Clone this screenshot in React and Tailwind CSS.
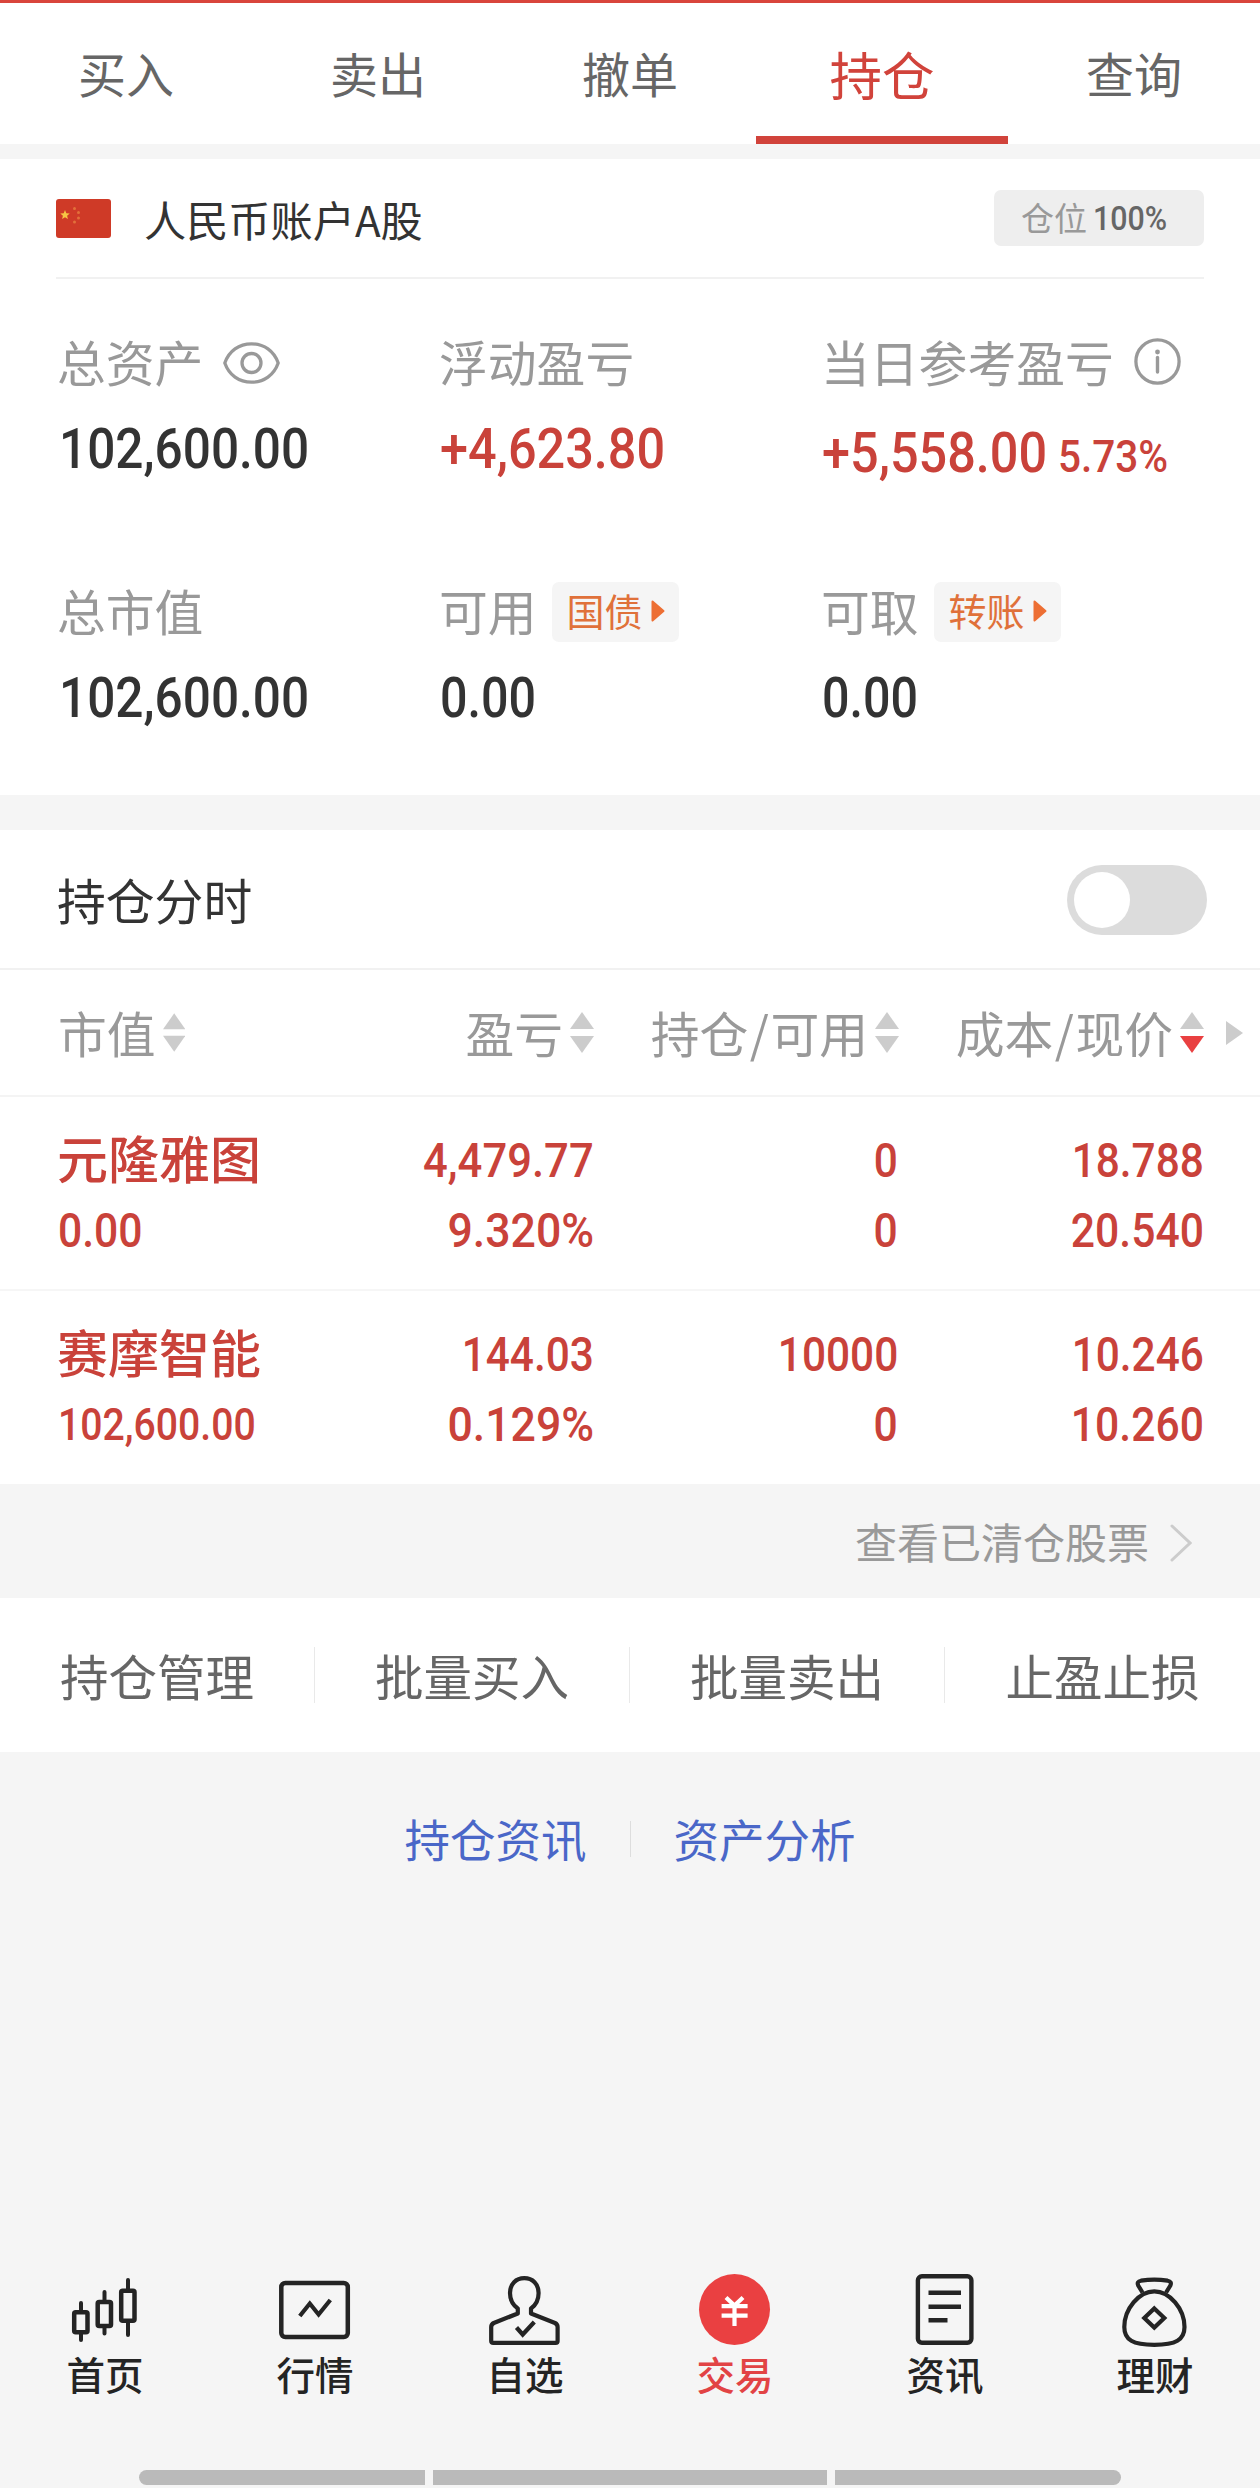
const RED = "text-[#c9423a]";

function Num({ children, className = "", size = "text-[56px]", right = false, scale = "scale-x-[0.9]" }) {
  return (
    <span
      className={`block whitespace-nowrap font-['Roboto',sans-serif] font-medium leading-none ${size} ${scale} ${right ? "origin-right" : "origin-left"} ${className}`}
    >
      {children}
    </span>
  );
}

function Tabs() {
  const tabs = ["买入", "卖出", "撤单", "持仓", "查询"];
  return (
    <nav className="grid h-[144px] grid-cols-5 border-t-[3px] border-[#d9453c] bg-white">
      {tabs.map((t) =>
        t === "持仓" ? (
          <div key={t} className="flex items-center justify-center border-b-8 border-[#d1433b] pt-[7px] text-[52.5px] text-[#d1433b]">
            <span>{t}</span>
          </div>
        ) : (
          <div key={t} className="flex items-center justify-center pb-[4px] text-[48px] text-[#666]">
            <span>{t}</span>
          </div>
        )
      )}
    </nav>
  );
}

function Flag() {
  return (
    <svg width="55" height="39" viewBox="0 0 55 39">
      <rect width="55" height="39" rx="3" fill="#cf3a27" />
      <path d="M9 11l1.3 3.2 3.4.3-2.6 2.2.8 3.3L9 18.200l-2.900 1.800.8-3.300-2.600-2.200 3.400-.3z" fill="#f6c544" />
      <g fill="#e2703a">
        <circle cx="18.500" cy="9.500" r="1.500" />
        <circle cx="22.500" cy="13.500" r="1.500" />
        <circle cx="22.500" cy="19" r="1.500" />
        <circle cx="18.500" cy="23" r="1.500" />
      </g>
    </svg>
  );
}

function EyeIcon() {
  return (
    <svg width="57" height="42" viewBox="0 0 57 42" fill="none" stroke="#999" strokeWidth="3.300">
      <path d="M1.800 21C6 9 16 1.800 28.500 1.800S51 9 55.200 21C51 33 41 40.200 28.500 40.200S6 33 1.800 21z" strokeLinejoin="round" />
      <circle cx="28.500" cy="21" r="9.500" />
    </svg>
  );
}

function InfoIcon() {
  return (
    <svg width="47" height="47" viewBox="0 0 47 47" fill="none" stroke="#999">
      <circle cx="23.500" cy="23.500" r="21.600" strokeWidth="3.300" />
      <circle cx="23.500" cy="14" r="2.400" fill="#999" stroke="none" />
      <path d="M23.500 19.500V34" strokeWidth="3.400" strokeLinecap="round" />
    </svg>
  );
}

function Chip({ children }) {
  return (
    <span className="-mt-px ml-[15px] flex h-[60px] w-[127px] items-center rounded-[7px] bg-[#f5f5f5] pl-[15px] text-[38px] text-[#e0713a]">
      <span className="-mt-[4px]">{children}</span>
      <svg className="-mt-[2px] ml-[8px]" width="14" height="22" viewBox="0 0 14 22">
        <path d="M1.500 1.500L12.500 11L1.500 20.500z" fill="#ed6f34" stroke="#ed6f34" strokeWidth="2" strokeLinejoin="round" />
      </svg>
    </span>
  );
}

function Stat({ label, extra, children }) {
  return (
    <div className="w-[382px] shrink-0">
      <div className="flex h-[60px] items-center text-[48.8px] text-[#999]">
        <span className="-ml-px -mt-[4px]">{label}</span>
        {extra}
      </div>
      <div className="mt-[28px] flex h-[56px] items-baseline whitespace-nowrap text-[#333]">{children}</div>
    </div>
  );
}

function Account() {
  return (
    <section className="h-[636px] bg-white pl-[56px] pr-[56px]">
      <div className="flex h-[120px] items-center border-b-2 border-[#f1f1f1]">
        <Flag />
        <span className="ml-[33px] mt-[2px] text-[42.2px] text-[#333]">人民币账户A股</span>
        <span className="ml-auto flex h-[56px] w-[210px] items-center rounded-[7px] bg-[#eee] pl-[27px]">
          <span className="-mt-[1px] text-[33px] text-[#999]">仓位</span>
          <Num size="text-[33px]" className="ml-[6px] mt-[1px] text-[#666]" scale="scale-x-[0.92]">100%</Num>
        </span>
      </div>
      <div className="flex pl-[2px] pt-[54px]">
        <Stat label="总资产" extra={<span className="ml-[20px]"><EyeIcon /></span>}>
          <Num className="ml-px" scale="scale-x-[0.885]">102,600.00</Num>
        </Stat>
        <Stat label="浮动盈亏">
          <Num className={RED}>+4,623.80</Num>
        </Stat>
        <Stat label="当日参考盈亏" extra={<span className="-mt-[3px] ml-[20px]"><InfoIcon /></span>}>
          <span className="w-[236px] pt-[4px]"><Num className={RED}>+5,558.00</Num></span>
          <Num size="text-[45px]" className={RED}>5.73%</Num>
        </Stat>
      </div>
      <div className="flex pl-[2px] pt-[105px]">
        <Stat label="总市值"><Num className="ml-px" scale="scale-x-[0.885]">102,600.00</Num></Stat>
        <Stat label="可用" extra={<Chip>国债</Chip>}><Num scale="scale-x-[0.865]">0.00</Num></Stat>
        <Stat label="可取" extra={<Chip>转账</Chip>}><Num scale="scale-x-[0.865]">0.00</Num></Stat>
      </div>
    </section>
  );
}

function Sort({ down }) {
  return (
    <svg className="ml-[9px]" width="24" height="41" viewBox="0 0 24 41">
      <path d="M12 0L24 17H0z" fill="#ccc" />
      <path d="M12 41L24 24H0z" fill={down ? "#e94041" : "#ccc"} />
    </svg>
  );
}

function HeadCell({ children, down, className = "" }) {
  return (
    <div className={`flex shrink-0 items-center whitespace-nowrap ${className}`}>
      <span className="-mr-[2px]">{children}</span>
      <Sort down={down} />
    </div>
  );
}

function Row({ name, value, valueSize, cells }) {
  return (
    <div className={`grid h-[192px] grid-cols-[255px_281px_304px_306px] pl-[58px] pt-[28px] ${RED}`}>
      <div>
        <div className="flex h-[70px] items-center text-[51px] font-medium">
          <span className="-ml-px -mt-[5px]">{name}</span>
        </div>
        <div className="flex h-[70px] items-center"><Num size={valueSize} scale="scale-x-[0.87]">{value}</Num></div>
      </div>
      {cells.map(([a, b], i) => (
        <div key={i} className="flex flex-col items-end">
          <div className="flex h-[70px] items-center">
            <Num size="text-[49px]" right scale={a.includes(",") ? "scale-x-[0.89]" : "scale-x-[0.865]"}>{a}</Num>
          </div>
          <div className="flex h-[70px] items-center">
            <Num size="text-[49px]" right scale={b.endsWith("%") ? "scale-x-[0.91]" : "scale-x-[0.87]"}>{b}</Num>
          </div>
        </div>
      ))}
    </div>
  );
}

function Positions() {
  return (
    <section className="h-[654px] bg-white">
      <div className="flex h-[140px] items-center border-b-2 border-[#f1f1f1] pl-[57px] pr-[53px]">
        <span className="text-[48.8px] text-[#333]">持仓分时</span>
        <span className="ml-auto mt-[2px] flex h-[70px] w-[140px] items-center rounded-full bg-[#dcdcdc] pl-[7px]">
          <span className="h-14 w-14 rounded-full bg-white" />
        </span>
      </div>
      <div className="flex h-[127px] items-center border-b-2 border-[#f4f4f4] pl-[58px] text-[48.8px] text-[#999]">
        <HeadCell className="w-[127px] justify-end">市值</HeadCell>
        <HeadCell className="w-[409px] justify-end">盈亏</HeadCell>
        <HeadCell className="w-[305px] justify-end">持仓<span className="mx-[1.500px]">/</span>可用</HeadCell>
        <HeadCell className="w-[305px] justify-end" down>成本<span className="mx-[1.500px]">/</span>现价</HeadCell>
        <svg className="ml-[22px]" width="17" height="24" viewBox="0 0 17 24">
          <path d="M0 0L17 12L0 24z" fill="#ccc" />
        </svg>
      </div>
      <div className="border-b-2 border-[#f6f6f6]">
        <Row name="元隆雅图" value="0.00" valueSize="text-[49px]" cells={[["4,479.77", "9.320%"], ["0", "0"], ["18.788", "20.540"]]} />
      </div>
      <Row name="赛摩智能" value="102,600.00" valueSize="text-[45px]" cells={[["144.03", "0.129%"], ["10000", "0"], ["10.246", "10.260"]]} />
    </section>
  );
}

function Actions() {
  const items = ["持仓管理", "批量买入", "批量卖出", "止盈止损"];
  return (
    <section className="grid h-[154px] grid-cols-4 items-center bg-white">
      {items.map((t, i) => (
        <div key={t} className={`flex h-14 items-center justify-center text-[48.5px] text-[#666] ${i < 3 ? "border-r border-[#e9e9e9]" : ""}`}>
          <span>{t}</span>
        </div>
      ))}
    </section>
  );
}

const icons = {
  首页: (
    <g strokeWidth="4.500">
      <rect x="9.200" y="44.200" width="13.300" height="20" rx="1.500" />
      <rect x="32.700" y="34" width="13.300" height="24" rx="1.500" />
      <rect x="56.200" y="22.800" width="13.300" height="30" rx="1.500" />
      <path d="M16 35V43M16 65V72M39.500 24V33M39.500 59V65.500M63 12V22M63 54V67" strokeWidth="4" strokeLinecap="round" />
    </g>
  ),
  行情: (
    <g strokeWidth="4.500">
      <rect x="6.300" y="15" width="66.500" height="54" rx="4" />
      <path d="M24.800 48L34.800 35.500L43.600 46.500L55.300 32" strokeWidth="4.200" />
    </g>
  ),
  自选: (
    <g strokeWidth="4.200" strokeLinejoin="round">
      <path d="M32.800 45.500V40.500C27 36.500 25 31.500 25 25C25 16 31 10.200 39.300 10.200S53.600 16 53.600 25C53.600 31.500 51.600 36.500 46 40.500V45.500L70 55Q72.600 56.300 72.600 59V73Q72.600 74.900 70.600 74.900H8.200Q6.200 74.900 6.200 73V59Q6.200 56.300 8.800 55Z" />
      <path d="M31.500 59.500L37.700 66.500L49.300 54" strokeLinejoin="miter" />
    </g>
  ),
  交易: (
    <g stroke="none">
      <circle cx="39.500" cy="41.500" r="35.500" fill="#ea4041" />
      <path d="M31 29.500L39.500 37.500L48 29.500M26.600 38.200H52.600M26.600 47.600H52.600M39.500 37.500V58" stroke="#fff" strokeWidth="4.200" />
    </g>
  ),
  资讯: (
    <g strokeWidth="4.400">
      <rect x="12.900" y="8.300" width="53.500" height="66.500" rx="4" />
      <path d="M23.500 24.700H56M23.500 38.700H56M23.500 52.300H42.500" />
    </g>
  ),
  理财: (
    <g strokeWidth="4.200" strokeLinejoin="round">
      <path d="M27.500 24.500L23.200 17.500Q21.500 13.500 26 12.700Q39.300 10.700 52.600 12.700Q57.100 13.500 55.400 17.500L51.100 24.500" />
      <path d="M39.300 23.400C24 23.400 9.300 41 9.300 59C9.300 72 18 76.800 39.300 76.800S69.500 72 69.500 59C69.500 41 54.600 23.400 39.300 23.400z" />
      <path d="M39.300 40.500L49.300 50L39.300 59.500L29.300 50z" strokeLinejoin="miter" />
    </g>
  ),
};

function BottomNav() {
  return (
    <footer className="mt-auto h-[220px]">
      <div className="grid grid-cols-6">
        {Object.keys(icons).map((k) => (
          <div key={k} className={`flex flex-col items-center text-[38.5px] font-medium leading-none ${k === "交易" ? "text-[#e24344]" : "text-[#242424]"}`}>
            <svg width="80" height="80" viewBox="0 0 80 80" fill="none" stroke="#242424">{icons[k]}</svg>
            <span className="mt-[6px] h-[39px]">{k}</span>
          </div>
        ))}
      </div>
      <div className="mx-auto mt-[77px] flex h-[15px] w-[982px] gap-2">
        <span className="w-[286px] rounded-l-full bg-[#bababa]" />
        <span className="flex-1 bg-[#bababa]" />
        <span className="w-[286px] rounded-r-full bg-[#bababa]" />
      </div>
    </footer>
  );
}

export default function App() {
  return (
    <main className="flex h-[2488px] w-[1260px] flex-col overflow-hidden bg-[#f5f5f5] font-['Noto_Sans_CJK_SC',sans-serif] leading-none">
      <Tabs />
      <div className="h-[15px] shrink-0" />
      <Account />
      <div className="h-[35px] shrink-0" />
      <Positions />
      <div className="flex h-[114px] shrink-0 items-center justify-end pr-[68px] text-[42px] text-[#999]">
        <span>查看已清仓股票</span>
        <svg className="ml-[21px] mt-[4px]" width="22" height="38" viewBox="0 0 22 38" fill="none" stroke="#ccc" strokeWidth="3" strokeLinecap="round">
          <path d="M2 2L20 19L2 36" />
        </svg>
      </div>
      <Actions />
      <div className="flex h-[173px] items-center justify-center text-[45.5px] text-[#4a67c8]">
        <span>持仓资讯</span>
        <span className="mx-[43px] h-9 w-px bg-[#ddd]" />
        <span>资产分析</span>
      </div>
      <BottomNav />
    </main>
  );
}
